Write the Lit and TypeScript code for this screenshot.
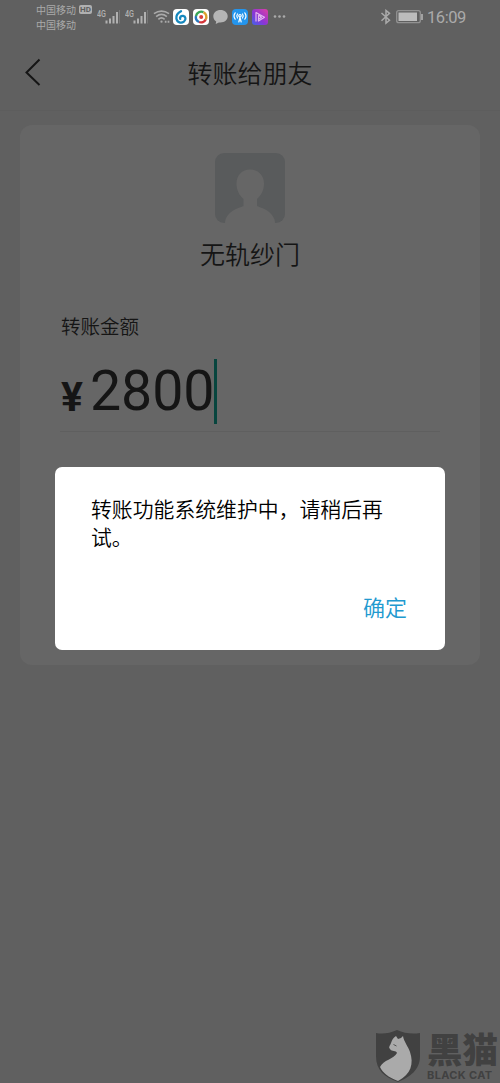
import { LitElement, html, css, svg } from "lit";
import { customElement } from "lit/decorators.js";

const signal = svg`
  <text x="0" y="7.500" font-size="8.500" font-weight="500" textLength="9" lengthAdjust="spacingAndGlyphs" fill="#b0b0b0">4G</text>
  <path d="M9.500 14.500v-3M13 14.500V9.500M16.500 14.500V7M20 14.500V3" stroke="#b0b0b0" stroke-width="2"/>
  <path d="M22.500 14.500V1" stroke="#777" stroke-width="1"/>`;

@customElement("status-bar")
export class StatusBar extends LitElement {
  static styles = css`
    :host { display: block; height: 35px; color: #aaa; font-family: Roboto, "Noto Sans CJK SC", sans-serif; font-weight: 400; }
    .bar { display: flex; align-items: flex-start; height: 35px; padding-left: 36px; box-sizing: border-box; }
    svg { display: block; flex: none; font-family: Roboto, sans-serif; }
    .carriers { width: 61px; padding-top: 2px; font-size: 10px; line-height: 15px; flex: none; white-space: nowrap; font-family: "Noto Sans CJK SC", sans-serif; }
    .line { display: flex; align-items: center; height: 15px; gap: 3px; }
    .hd { background: #b0b0b0; color: #5d5d5d; border-radius: 2px; font: 700 8px/9px Roboto, sans-serif; width: 13px; text-align: center; height: 9px; }
    .icons { display: flex; padding-top: 9px; }
    .apps { display: flex; gap: 4px; padding-left: 3px; }
    .end { display: flex; margin-left: auto; padding: 9px 34px 0 0; }
    .time { font-size: 16.5px; line-height: 17px; margin-left: 3px; width: 39px; white-space: nowrap; letter-spacing: -0.45px; }
  `;
  render() {
    return html`<div class="bar">
      <div class="carriers">
        <div class="line"><span>中国移动</span><span class="hd">HD</span></div>
        <div class="line">中国移动</div>
      </div>
      <div class="icons">
        <svg width="28" height="16">${signal}</svg>
        <svg width="28" height="16">${signal}</svg>
        <svg width="17" height="16" viewBox="0 0 18 16" fill="none" stroke="#aaa" stroke-width="1.700">
          <path d="M1 4.500Q9-1 17 4.500M3.300 7.600Q9 3 14.700 7.600M5.700 10.500Q9 7.500 12.300 10.500"/>
          <circle cx="9" cy="13" r="1.200" fill="#aaa" stroke="none"/>
          <path d="M12.500 13h1.800M15.500 13h1.800" stroke-width="2"/>
        </svg>
        <div class="apps">
          <svg width="16" height="16" viewBox="0 0 16 16">
            <rect width="16" height="16" rx="4" fill="#fff"/>
            <path d="M8 2.200C4.500 4 3 7 3.400 9.700c.6 4 5 4.700 7.500 2.900 2.500-2 1.800-5.200-.7-5.700-2.200-.4-3.700 1.300-3 3" fill="none" stroke="#1688be" stroke-width="2.300" stroke-linecap="round"/>
          </svg>
          <svg width="16" height="16" viewBox="0 0 16 16">
            <rect width="16" height="16" rx="4" fill="#fff"/>
            <g fill="none" stroke-width="2.400"><path d="M3 7A5.300 5.300 0 0 1 10.500 3.200" stroke="#39a657"/><path d="M10.500 3.200A5.300 5.300 0 0 1 12.700 10.500" stroke="#d9a02b"/><path d="M12.700 10.500A5.300 5.300 0 0 1 6 13" stroke="#d53539"/><path d="M6 13A5.300 5.300 0 0 1 3 7" stroke="#2878bd"/></g>
            <circle cx="8.200" cy="8" r="2" fill="#d7403b"/>
          </svg>
          <svg width="15" height="16" viewBox="0 0 15 16"><path d="M7.500 1C3.400 1 .3 3.700.3 7.300c0 2.200 1 4 2.900 5.100L2.700 15l3.200-1.600c5 .7 8.800-2.100 8.800-6.100C14.700 3.700 11.600 1 7.500 1Z" fill="#b5b5b5"/></svg>
          <svg width="16" height="16" viewBox="0 0 16 16">
            <rect width="16" height="16" rx="4" fill="#2495ed"/>
            <g fill="none" stroke="#fff" stroke-width="1.200" stroke-linecap="round"><path d="M3.200 3.800Q.8 7 3.200 10.200M5.500 5Q4 7 5.500 9M12.800 3.800Q15.200 7 12.800 10.200M10.500 5Q12 7 10.500 9M8 8.500 6.800 13M8 8.500 9.200 13"/><circle cx="8" cy="6.700" r="1.200"/></g>
          </svg>
          <svg width="16" height="16" viewBox="0 0 16 16">
            <defs><linearGradient id="media" x1="0" y1="1" x2="1" y2="0"><stop offset="0" stop-color="#4264e9"/><stop offset=".45" stop-color="#8b35d5"/><stop offset="1" stop-color="#e13fa4"/></linearGradient></defs>
            <rect width="16" height="16" rx="3" fill="url(#media)"/>
            <path d="M4 12.500v-9l8.500 4.700L6.500 12V6l3 2.200-3 2" fill="none" stroke="#e4b6f1" stroke-width="1.200" stroke-linejoin="round"/>
          </svg>
          <svg width="15" height="16" fill="#aaa"><circle cx="3" cy="7.500" r="1.300"/><circle cx="7.500" cy="7.500" r="1.300"/><circle cx="12" cy="7.500" r="1.300"/></svg>
        </div>
      </div>
      <div class="end">
        <svg width="12" height="16" viewBox="0 0 12 16" fill="none" stroke="#aaa" stroke-width="1.500"><path d="M1.500 4 9.500 11.300 6 14.200V1.500L9.500 4.300 1.500 11.700"/></svg>
        <svg width="32" height="16" viewBox="0 0 32 16"><rect x="4.700" y="1.700" width="23.600" height="12" rx="2" fill="none" stroke="#929292" stroke-width="1.300"/><rect x="6.500" y="3.500" width="18.500" height="8.500" fill="#bcbcbc"/><path d="M30 5v6" stroke="#aaa" stroke-width="1.800"/></svg>
        <span class="time">16:09</span>
      </div>
    </div>`;
  }
}

@customElement("app-root")
export class AppRoot extends LitElement {
  static styles = css`
    :host { display: block; position: relative; width: 500px; height: 1083px; overflow: hidden; background: #606060; color: #151515; font-family: "Noto Sans CJK SC", sans-serif; font-weight: 350; }
    svg { display: block; }
    .header { display: grid; grid-template-columns: 66px 1fr 66px; align-items: center; height: 76px; box-sizing: border-box; border-bottom: 1px solid #5d5d5d; }
    .back { padding-left: 24px; padding-bottom: 2px; }
    .title { text-align: center; font-size: 25px; line-height: 36px; padding-bottom: 2px; }
    .card { margin: 14px 20px 0; height: 540px; box-sizing: border-box; background: #666; border-radius: 12px; padding: 28px 40px 0; }
    .person { display: flex; flex-direction: column; align-items: center; }
    .name { font-size: 25px; line-height: 36px; margin-top: 12px; }
    .label { margin: 41px 0 0 1px; font-size: 19.5px; line-height: 28px; }
    .amount { display: flex; align-items: flex-start; height: 72px; margin-top: 19px; border-bottom: 1px solid #5f5f5f; font-family: Roboto, sans-serif; }
    .yen { font-size: 41px; line-height: 42px; font-weight: 700; width: 30px; padding-top: 17px; box-sizing: border-box; padding-left: 1px; }
    .digits { font-size: 55.5px; line-height: 66px; font-weight: 400; letter-spacing: -0.1px; width: 124px; white-space: nowrap; }
    .caret { width: 3px; height: 65px; background: #07453e; }
    .dialog { position: absolute; left: 54.5px; top: 466.5px; width: 390.5px; height: 183.5px; box-sizing: border-box; display: flex; flex-direction: column; justify-content: space-between; padding: 27.5px 38px 28.5px 36.5px; background: #fff; border-radius: 7px; color: #000; }
    .message { font-size: 20.85px; line-height: 28px; white-space: nowrap; }
    .confirm { align-self: flex-end; border: 0; padding: 0; background: none; color: #2199cf; font: inherit; font-size: 22px; line-height: 32px; }
    .watermark { position: absolute; right: 0; bottom: 0; width: 126px; height: 55px; display: flex; color: #414141; }
    .brand { width: 76px; padding: 4px 0 0 3px; white-space: nowrap; box-sizing: border-box; }
    .cn { font-size: 35.5px; line-height: 36px; height: 36px; font-weight: 900; margin-top: -2px; }
    .en { font: 700 11px/12px Inter, sans-serif; letter-spacing: 0.35px; margin-top: 3px; }
  `;
  render() {
    return html`
      <status-bar></status-bar>
      <div class="header">
        <div class="back"><svg width="18" height="28" viewBox="0 0 18 28"><path d="M15.500 1.500 2.500 14.500l13 12.500" fill="none" stroke="#151515" stroke-width="2"/></svg></div>
        <div class="title">转账给朋友</div>
      </div>
      <div class="card">
        <div class="person">
          <svg width="70" height="70" viewBox="0 0 70 70">
            <rect width="70" height="70" rx="9" fill="#595b5c"/>
            <path d="M35 16.500c-8 0-13.500 6-13.500 14 0 7 3 12 7 15.500v7c-8 3-15.500 6-18 13.500Q10 68 10 70h50q0-2-.5-3.500C57 59 50 56 42 53v-7c4-3.500 7-8.500 7-15.500 0-8-6-14-14-14Z" fill="#666"/>
          </svg>
          <div class="name">无轨纱门</div>
        </div>
        <div class="label">转账金额</div>
        <div class="amount"><span class="yen">¥</span><span class="digits">2800</span><span class="caret"></span></div>
      </div>
      <div class="dialog" role="dialog">
        <div class="message">转账功能系统维护中，请稍后再<br>试。</div>
        <button class="confirm">确定</button>
      </div>
      <div class="watermark">
        <svg width="50" height="55" viewBox="0 0 50 55">
          <path d="M2 5Q12 7 23 2Q34 7 46 5V28C46 42 36 49 24 54C10 49 2 42 2 28Z" fill="#414141"/>
          <path d="M22 8 24 11Q27 11 29 8C30 14 34 18 36 24C40 36 37 46 24 53C14 49 9 45 6 39C9 32 20 31 23 25C22 22 18 24 16 21Q14.500 20 15.500 18C18 15 17 11 22 8Z" fill="#aaa"/>
          <path d="m19.500 16.500 3 1.500" stroke="#555" stroke-width="1"/>
        </svg>
        <div class="brand"><div class="cn">黑猫</div><div class="en">BLACK CAT</div></div>
      </div>`;
  }
}
